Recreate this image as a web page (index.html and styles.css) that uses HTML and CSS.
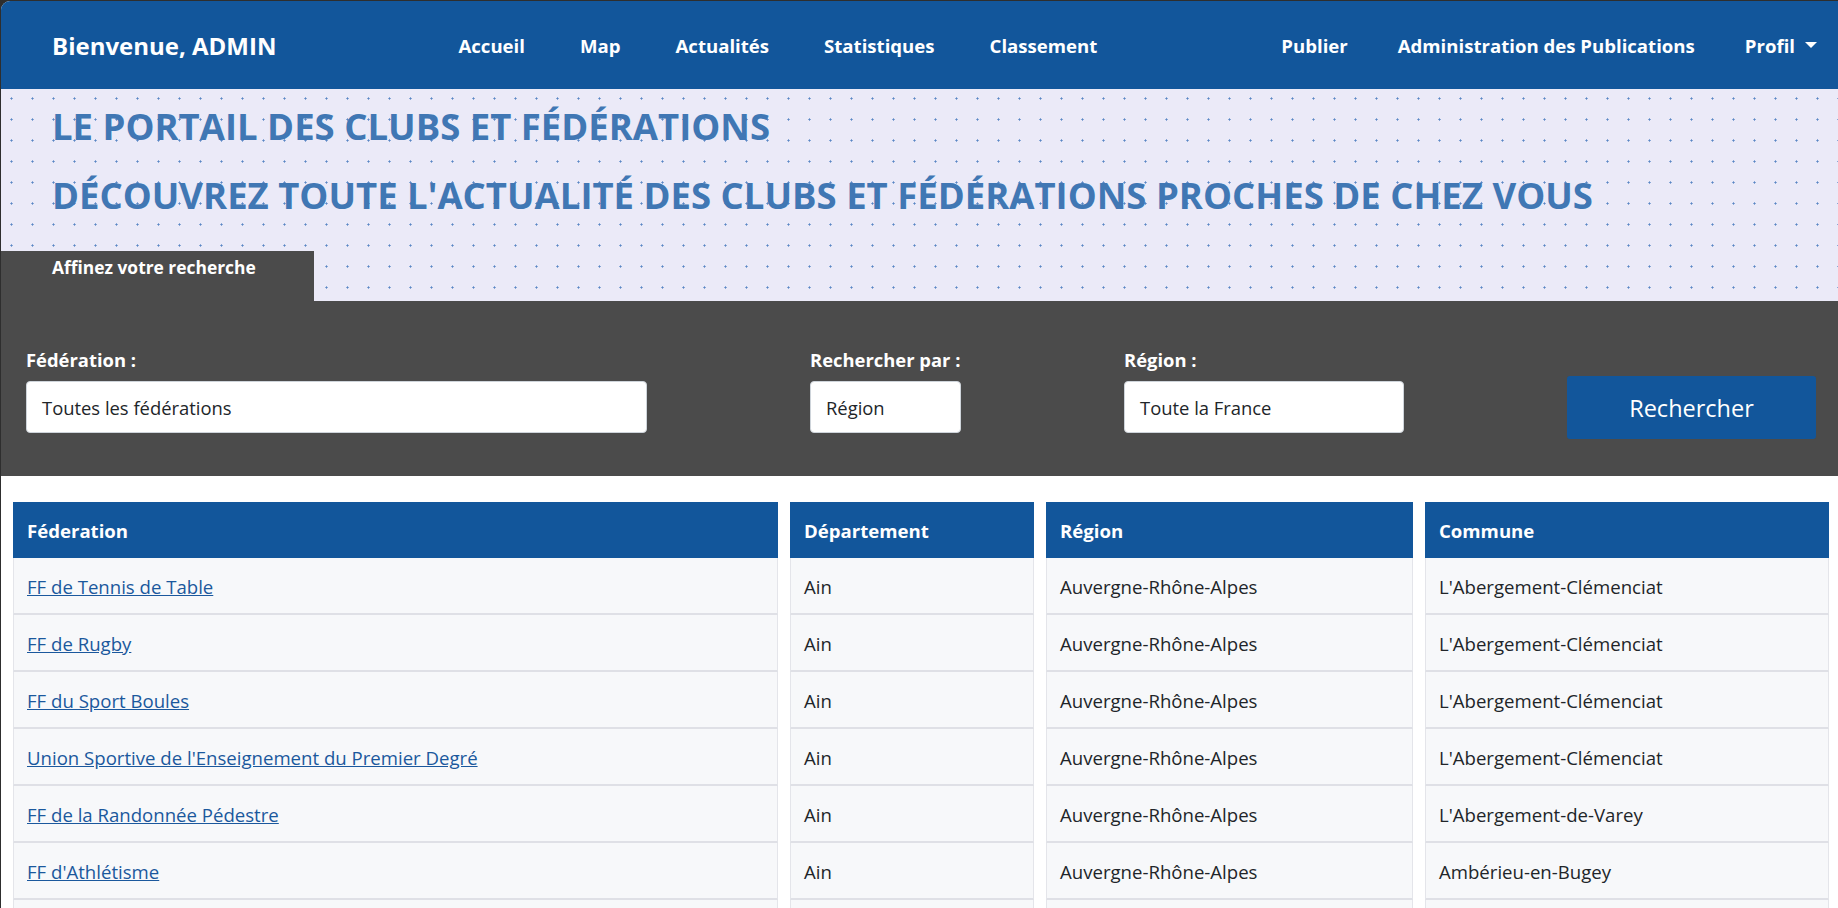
FILE: index.html
```html
<!DOCTYPE html>
<html lang="fr">
<head>
<meta charset="utf-8">
<title>Portail des clubs et fédérations</title>
<link rel="stylesheet" href="styles.css">
</head>
<body>
<div class="frame">
  <header class="topbar">
    <div class="brand">Bienvenue, ADMIN</div>
    <nav class="nav-main">
      <a class="nav-link" href="#">Accueil</a>
      <a class="nav-link" href="#">Map</a>
      <a class="nav-link" href="#">Actualités</a>
      <a class="nav-link" href="#">Statistiques</a>
      <a class="nav-link" href="#">Classement</a>
    </nav>
    <nav class="nav-right">
      <a class="nav-link" href="#">Publier</a>
      <a class="nav-link" href="#">Administration des Publications</a>
      <a class="nav-link" href="#">Profil<span class="caret"></span></a>
    </nav>
  </header>

  <section class="hero">
    <h1 class="hero-title">LE PORTAIL DES CLUBS ET FÉDÉRATIONS</h1>
    <h2 class="hero-title hero-sub">DÉCOUVREZ TOUTE L'ACTUALITÉ DES CLUBS ET FÉDÉRATIONS PROCHES DE CHEZ VOUS</h2>
    <div class="tab">Affinez votre recherche</div>
  </section>

  <section class="search">
    <div class="field field-fed">
      <label class="field-label">Fédération :</label>
      <div class="select">Toutes les fédérations</div>
    </div>
    <div class="field field-by">
      <label class="field-label">Rechercher par :</label>
      <div class="select">Région</div>
    </div>
    <div class="field field-region">
      <label class="field-label">Région :</label>
      <div class="select">Toute la France</div>
    </div>
    <button class="btn-search" type="button">Rechercher</button>
  </section>

  <table class="results">
    <colgroup>
      <col class="col-fed">
      <col class="col-dep">
      <col class="col-reg">
      <col class="col-com">
    </colgroup>
    <thead>
      <tr><th>Féderation</th><th>Département</th><th>Région</th><th>Commune</th></tr>
    </thead>
    <tbody>
      <tr><td><a href="#">FF de Tennis de Table</a></td><td>Ain</td><td>Auvergne-Rhône-Alpes</td><td>L'Abergement-Clémenciat</td></tr>
      <tr><td><a href="#">FF de Rugby</a></td><td>Ain</td><td>Auvergne-Rhône-Alpes</td><td>L'Abergement-Clémenciat</td></tr>
      <tr><td><a href="#">FF du Sport Boules</a></td><td>Ain</td><td>Auvergne-Rhône-Alpes</td><td>L'Abergement-Clémenciat</td></tr>
      <tr><td><a href="#">Union Sportive de l'Enseignement du Premier Degré</a></td><td>Ain</td><td>Auvergne-Rhône-Alpes</td><td>L'Abergement-Clémenciat</td></tr>
      <tr><td><a href="#">FF de la Randonnée Pédestre</a></td><td>Ain</td><td>Auvergne-Rhône-Alpes</td><td>L'Abergement-de-Varey</td></tr>
      <tr><td><a href="#">FF d'Athlétisme</a></td><td>Ain</td><td>Auvergne-Rhône-Alpes</td><td>Ambérieu-en-Bugey</td></tr>
      <tr class="row-empty"><td></td><td></td><td></td><td></td></tr>
    </tbody>
  </table>
</div>
</body>
</html>
```

FILE: styles.css
```css
html, body {
  margin: 0;
  padding: 0;
  overflow: hidden;
  background: #2e2e2e;
  font-family: "Open Sans", "Noto Sans", sans-serif;
}

.frame {
  margin: 1px 0 0 1px;
  height: calc(100vh - 1px);
  overflow: hidden;
  border-top-left-radius: 9px;
  background: #ffffff;
}

/* ---------- top bar ---------- */
.topbar {
  height: 88px;
  background: #12569b;
  color: #fff;
  display: flex;
  align-items: center;
  padding: 0 21px 0 51px;
}

.brand {
  font-size: 24px;
  font-weight: 700;
  white-space: nowrap;
}

.nav-main {
  display: flex;
  gap: 55px;
  margin-left: 182px;
}

.nav-right {
  display: flex;
  align-items: center;
  gap: 50px;
  margin-left: auto;
}

.nav-link {
  font-size: 18.6px;
  font-weight: 700;
  color: #fff;
  text-decoration: none;
  white-space: nowrap;
}

.caret {
  display: inline-block;
  width: 0;
  height: 0;
  border-top: 6px solid #fff;
  border-left: 6px solid transparent;
  border-right: 6px solid transparent;
  margin-left: 10px;
  vertical-align: 0.22em;
}

/* ---------- hero ---------- */
.hero {
  height: 212px;
  box-sizing: border-box;
  padding: 16px 0 0 51px;
  display: flex;
  flex-direction: column;
  align-items: flex-start;
  background-color: #ebeaf8;
  background-image: radial-gradient(circle, #5a86c4 0, #5a86c4 0.8px, rgba(90,134,196,0) 1.4px);
  background-size: 21px 21px;
  background-position: 0 -1px;
}

.hero-title {
  margin: 0;
  font-size: 36.5px;
  line-height: 43px;
  font-weight: 700;
  color: #4077b4;
  white-space: nowrap;
}

.hero-sub {
  margin-top: 26px;
}

.tab {
  margin-top: auto;
  margin-left: -51px;
  width: 313px;
  height: 50px;
  box-sizing: border-box;
  padding: 2px 0 0 51px;
  background: #4b4b4b;
  color: #fff;
  font-size: 17.4px;
  font-weight: 700;
  line-height: 28px;
}

/* ---------- search panel ---------- */
.search {
  height: 175px;
  box-sizing: border-box;
  background: #4b4b4b;
  padding: 45px 21px 0 25px;
  display: flex;
  align-items: flex-start;
  gap: 163px;
}

.field-label {
  display: block;
  color: #fff;
  font-size: 18.4px;
  font-weight: 700;
  line-height: 27px;
  margin-bottom: 8px;
  white-space: nowrap;
}

.select {
  height: 52px;
  box-sizing: border-box;
  background: #fff;
  border: 1px solid #ced4da;
  border-radius: 4px;
  padding: 0 15px;
  display: flex;
  align-items: center;
  color: #212529;
  font-size: 18.4px;
  white-space: nowrap;
}

.field-fed .select { width: 621px; }
.field-by .select { width: 151px; }
.field-region .select { width: 280px; }

.btn-search {
  width: 249px;
  height: 63px;
  margin-top: 30px;
  border: 0;
  border-radius: 3px;
  background: #12569b;
  color: #fff;
  font-family: inherit;
  font-size: 23.5px;
  font-weight: 400;
  padding-top: 2px;
}

/* ---------- results table ---------- */
.results {
  margin-top: 26px;
  width: 1840px;
  table-layout: fixed;
  border-collapse: separate;
  border-spacing: 12px 0;
  font-size: 18.6px;
  color: #212529;
}

.col-fed { width: 765px; }
.col-dep { width: 244px; }
.col-reg { width: 367px; }
.col-com { width: 404px; }

.results th {
  background: #12569b;
  color: #fff;
  text-align: left;
  font-weight: 700;
  line-height: 27px;
  padding: 15px 14px 14px;
  white-space: nowrap;
}

.results td {
  background: #f7f8fa;
  line-height: 27px;
  padding: 15px 13px 13px;
  border-left: 1px solid #e4e5ea;
  border-right: 1px solid #e4e5ea;
  border-bottom: 2px solid #dfe0e6;
  white-space: nowrap;
}

.results .row-empty td {
  height: 27px;
}

.results a {
  color: #1b589d;
  text-decoration: underline;
}
```
